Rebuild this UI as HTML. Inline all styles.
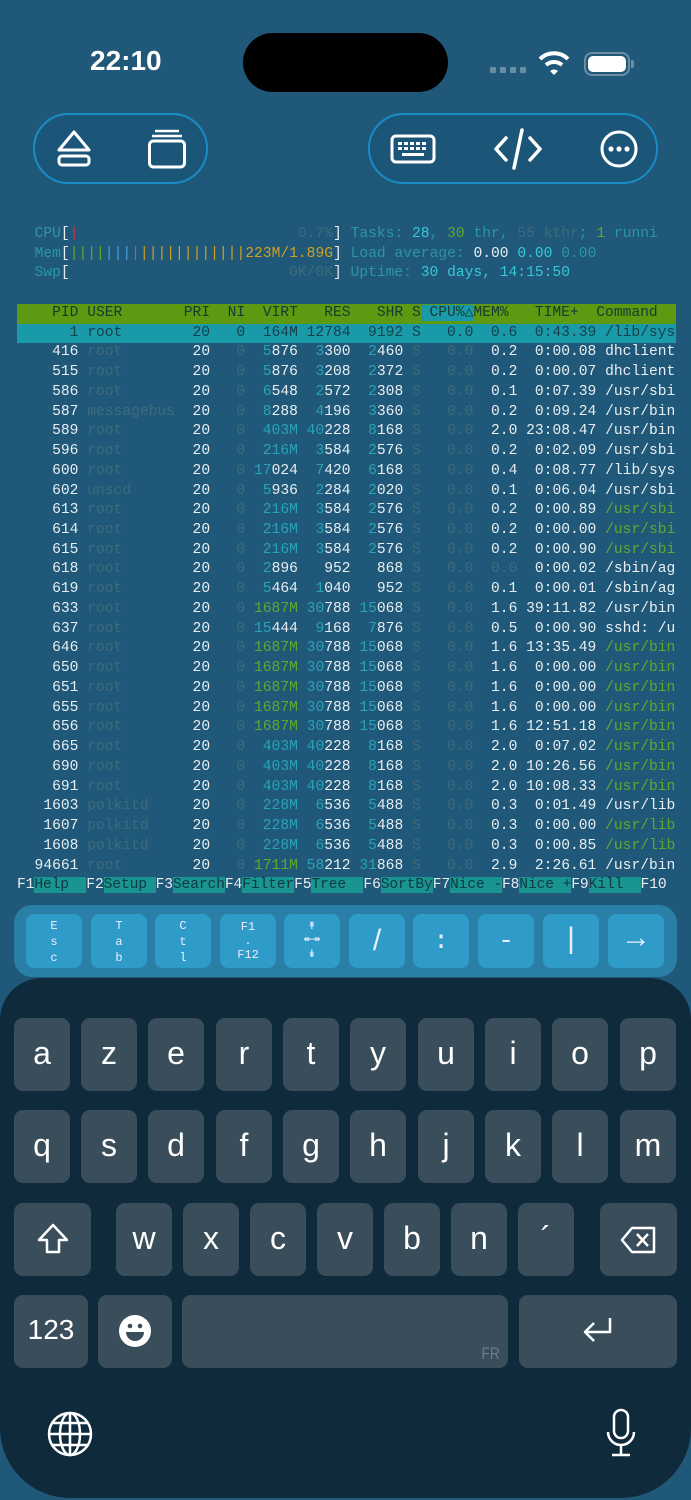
<!DOCTYPE html>
<html><head><meta charset="utf-8"><style>
*{margin:0;padding:0;box-sizing:border-box}
html,body{width:691px;height:1500px;overflow:hidden}
body{background:#1f5878;position:relative;font-family:"Liberation Sans",sans-serif}
.abs{position:absolute}
#term{position:absolute;left:17px;top:225px;font-family:"Liberation Mono",monospace;font-size:14.63px;line-height:19.74px;color:#e8eef2}
#term div{height:19.74px;width:659px;white-space:pre}
d{color:#3f6a7c}t{color:#2aa3b5}g{color:#5fa830}c{color:#35c9d6}l{color:#2a96a6}y{color:#d0a020}bl{color:#4aa0d8}m{color:#a05aa0}r{color:#d03040}
.hd{background:#5d9a12;color:#183a30}
.hl{background:#1a9aa8}
.sel{background:#1a9aa8;color:#16404c}
.fk{background:#1a9490;color:#0e3a44}
.pill{position:absolute;border:2px solid #1a8cc8;border-radius:36px;background:#1b5679}
.xb{position:absolute;left:14px;top:905px;width:663px;height:72px;background:#2a7fa6;border-radius:18px}
.xk{position:absolute;top:914px;width:56px;height:54px;background:#2e9bc8;border-radius:8px;color:#eef;text-align:center;font-family:"Liberation Mono",monospace}
.kb{position:absolute;left:0;top:978px;width:691px;height:520px;background:#0e2a3b;border-radius:42px 42px 70px 70px}
.key{position:absolute;width:56px;height:73px;background:#3a4d5a;border-radius:9px;color:#fff;font-size:32px;text-align:center;line-height:70px}
</style></head><body>
<div class="abs" style="left:90px;top:45px;font-size:28px;font-weight:bold;color:#fff">22:10</div>
<div class="abs" style="left:243px;top:33px;width:205px;height:59px;background:#000;border-radius:30px"></div>
<div class="abs" style="left:490px;top:67px;width:6px;height:6px;background:#6a8fa3;border-radius:1px;box-shadow:10px 0 #6a8fa3,20px 0 #6a8fa3,30px 0 #6a8fa3"></div>
<svg class="abs" style="left:538px;top:50px" width="32" height="26" viewBox="0 0 32 26"><path d="M2 9 A20 20 0 0 1 30 9" stroke="#fff" stroke-width="4" fill="none"/><path d="M8 15 A12 12 0 0 1 24 15" stroke="#fff" stroke-width="4" fill="none"/><path d="M12 21 L16 25 L20 21 A6 6 0 0 0 12 21Z" fill="#fff"/></svg>
<div class="abs" style="left:584px;top:52px;width:46px;height:24px;border:2px solid #6a8fa3;border-radius:8px;padding:2px"><div style="width:100%;height:100%;background:#fff;border-radius:5px"></div></div>
<div class="abs" style="left:631px;top:60px;width:3px;height:8px;background:#6a8fa3;border-radius:0 2px 2px 0"></div>

<div class="pill" style="left:33px;top:113px;width:175px;height:71px"></div>
<svg class="abs" style="left:54px;top:128px" width="40" height="42" viewBox="0 0 40 42"><path d="M20 4 L35 22 H5 Z" fill="none" stroke="#fff" stroke-width="3" stroke-linejoin="round"/><rect x="5" y="28" width="30" height="9" rx="3" fill="none" stroke="#fff" stroke-width="3"/></svg>
<svg class="abs" style="left:146px;top:128px" width="42" height="42" viewBox="0 0 42 42"><path d="M9 3 H33 M6 8 H36" stroke="#fff" stroke-width="2.5"/><rect x="3.5" y="13" width="35" height="26" rx="4" fill="none" stroke="#fff" stroke-width="3"/></svg>
<div class="pill" style="left:368px;top:113px;width:290px;height:71px"></div>
<svg class="abs" style="left:390px;top:134px" width="46" height="30" viewBox="0 0 46 30"><rect x="2" y="2" width="42" height="26" rx="4" fill="none" stroke="#fff" stroke-width="3"/><g fill="#fff"><rect x="8" y="8" width="4" height="3"/><rect x="14" y="8" width="4" height="3"/><rect x="20" y="8" width="4" height="3"/><rect x="26" y="8" width="4" height="3"/><rect x="32" y="8" width="4" height="3"/><rect x="8" y="13" width="4" height="3"/><rect x="14" y="13" width="4" height="3"/><rect x="20" y="13" width="4" height="3"/><rect x="26" y="13" width="4" height="3"/><rect x="32" y="13" width="4" height="3"/><rect x="12" y="19" width="22" height="3"/></g></svg>
<svg class="abs" style="left:492px;top:126px" width="52" height="46" viewBox="0 0 52 46"><path d="M14 12 L4 23 L14 34 M38 12 L48 23 L38 34 M30 4 L22 42" stroke="#fff" stroke-width="3.5" fill="none" stroke-linecap="round" stroke-linejoin="round"/></svg>
<svg class="abs" style="left:598px;top:128px" width="42" height="42" viewBox="0 0 42 42"><circle cx="21" cy="21" r="17" fill="none" stroke="#fff" stroke-width="3"/><circle cx="13" cy="21" r="2.6" fill="#fff"/><circle cx="21" cy="21" r="2.6" fill="#fff"/><circle cx="29" cy="21" r="2.6" fill="#fff"/></svg>

<div id="term"><div>  <l>CPU</l>[<r>|</r>                         <d>0.7%</d>] <l>Tasks: </l><c>28</c><l>, </l><g>30</g><l> thr, </l><d>55 kthr</d><l>; </l><g>1</g><l> runni</l></div><div>  <l>Mem</l>[<g>||||</g><bl>|||</bl><m>|</m><y>||||||||||||223M/1.89G</y>] <l>Load average: </l>0.00 <c>0.00</c> <l>0.00</l></div><div>  <l>Swp</l>[                         <d>0K/0K</d>] <l>Uptime: </l><c>30 days, 14:15:50</c></div><div> </div><div class="hd">    PID USER       PRI  NI  VIRT   RES   SHR S<span class="hl"> CPU%△</span>MEM%   TIME+  Command</div><div class="sel">      1 root        20   0  164M 12784  9192 S   0.0  0.6  0:43.39 /lib/sys</div><div>    416 <d>root      </d>  20 <d>  0</d>  <t>5</t>876  <t>3</t>300  <t>2</t>460 <d>S</d> <d>  0.0</d>  0.2  0:00.08 dhclient</div><div>    515 <d>root      </d>  20 <d>  0</d>  <t>5</t>876  <t>3</t>208  <t>2</t>372 <d>S</d> <d>  0.0</d>  0.2  0:00.07 dhclient</div><div>    586 <d>root      </d>  20 <d>  0</d>  <t>6</t>548  <t>2</t>572  <t>2</t>308 <d>S</d> <d>  0.0</d>  0.1  0:07.39 /usr/sbi</div><div>    587 <d>messagebus</d>  20 <d>  0</d>  <t>8</t>288  <t>4</t>196  <t>3</t>360 <d>S</d> <d>  0.0</d>  0.2  0:09.24 /usr/bin</div><div>    589 <d>root      </d>  20 <d>  0</d>  <t>403M</t> <t>40</t>228  <t>8</t>168 <d>S</d> <d>  0.0</d>  2.0 23:08.47 /usr/bin</div><div>    596 <d>root      </d>  20 <d>  0</d>  <t>216M</t>  <t>3</t>584  <t>2</t>576 <d>S</d> <d>  0.0</d>  0.2  0:02.09 /usr/sbi</div><div>    600 <d>root      </d>  20 <d>  0</d> <t>17</t>024  <t>7</t>420  <t>6</t>168 <d>S</d> <d>  0.0</d>  0.4  0:08.77 /lib/sys</div><div>    602 <d>unscd     </d>  20 <d>  0</d>  <t>5</t>936  <t>2</t>284  <t>2</t>020 <d>S</d> <d>  0.0</d>  0.1  0:06.04 /usr/sbi</div><div>    613 <d>root      </d>  20 <d>  0</d>  <t>216M</t>  <t>3</t>584  <t>2</t>576 <d>S</d> <d>  0.0</d>  0.2  0:00.89 <g>/usr/sbi</g></div><div>    614 <d>root      </d>  20 <d>  0</d>  <t>216M</t>  <t>3</t>584  <t>2</t>576 <d>S</d> <d>  0.0</d>  0.2  0:00.00 <g>/usr/sbi</g></div><div>    615 <d>root      </d>  20 <d>  0</d>  <t>216M</t>  <t>3</t>584  <t>2</t>576 <d>S</d> <d>  0.0</d>  0.2  0:00.90 <g>/usr/sbi</g></div><div>    618 <d>root      </d>  20 <d>  0</d>  <t>2</t>896   952   868 <d>S</d> <d>  0.0</d> <d> 0.0</d>  0:00.02 /sbin/ag</div><div>    619 <d>root      </d>  20 <d>  0</d>  <t>5</t>464  <t>1</t>040   952 <d>S</d> <d>  0.0</d>  0.1  0:00.01 /sbin/ag</div><div>    633 <d>root      </d>  20 <d>  0</d> <g>1687M</g> <t>30</t>788 <t>15</t>068 <d>S</d> <d>  0.0</d>  1.6 39:11.82 /usr/bin</div><div>    637 <d>root      </d>  20 <d>  0</d> <t>15</t>444  <t>9</t>168  <t>7</t>876 <d>S</d> <d>  0.0</d>  0.5  0:00.90 sshd: /u</div><div>    646 <d>root      </d>  20 <d>  0</d> <g>1687M</g> <t>30</t>788 <t>15</t>068 <d>S</d> <d>  0.0</d>  1.6 13:35.49 <g>/usr/bin</g></div><div>    650 <d>root      </d>  20 <d>  0</d> <g>1687M</g> <t>30</t>788 <t>15</t>068 <d>S</d> <d>  0.0</d>  1.6  0:00.00 <g>/usr/bin</g></div><div>    651 <d>root      </d>  20 <d>  0</d> <g>1687M</g> <t>30</t>788 <t>15</t>068 <d>S</d> <d>  0.0</d>  1.6  0:00.00 <g>/usr/bin</g></div><div>    655 <d>root      </d>  20 <d>  0</d> <g>1687M</g> <t>30</t>788 <t>15</t>068 <d>S</d> <d>  0.0</d>  1.6  0:00.00 <g>/usr/bin</g></div><div>    656 <d>root      </d>  20 <d>  0</d> <g>1687M</g> <t>30</t>788 <t>15</t>068 <d>S</d> <d>  0.0</d>  1.6 12:51.18 <g>/usr/bin</g></div><div>    665 <d>root      </d>  20 <d>  0</d>  <t>403M</t> <t>40</t>228  <t>8</t>168 <d>S</d> <d>  0.0</d>  2.0  0:07.02 <g>/usr/bin</g></div><div>    690 <d>root      </d>  20 <d>  0</d>  <t>403M</t> <t>40</t>228  <t>8</t>168 <d>S</d> <d>  0.0</d>  2.0 10:26.56 <g>/usr/bin</g></div><div>    691 <d>root      </d>  20 <d>  0</d>  <t>403M</t> <t>40</t>228  <t>8</t>168 <d>S</d> <d>  0.0</d>  2.0 10:08.33 <g>/usr/bin</g></div><div>   1603 <d>polkitd   </d>  20 <d>  0</d>  <t>228M</t>  <t>6</t>536  <t>5</t>488 <d>S</d> <d>  0.0</d>  0.3  0:01.49 /usr/lib</div><div>   1607 <d>polkitd   </d>  20 <d>  0</d>  <t>228M</t>  <t>6</t>536  <t>5</t>488 <d>S</d> <d>  0.0</d>  0.3  0:00.00 <g>/usr/lib</g></div><div>   1608 <d>polkitd   </d>  20 <d>  0</d>  <t>228M</t>  <t>6</t>536  <t>5</t>488 <d>S</d> <d>  0.0</d>  0.3  0:00.85 <g>/usr/lib</g></div><div>  94661 <d>root      </d>  20 <d>  0</d> <g>1711M</g> <t>58</t>212 <t>31</t>868 <d>S</d> <d>  0.0</d>  2.9  2:26.61 /usr/bin</div><div style="letter-spacing:-0.12px">F1<span class="fk">Help  </span>F2<span class="fk">Setup </span>F3<span class="fk">Search</span>F4<span class="fk">Filter</span>F5<span class="fk">Tree  </span>F6<span class="fk">SortBy</span>F7<span class="fk">Nice -</span>F8<span class="fk">Nice +</span>F9<span class="fk">Kill  </span>F10</div></div>

<div class="xb"></div>
<div class="xk" style="left:26px;font-size:12px;line-height:16px;padding-top:4px">E<br>s<br>c</div>
<div class="xk" style="left:91px;font-size:12px;line-height:16px;padding-top:4px">T<br>a<br>b</div>
<div class="xk" style="left:155px;font-size:12px;line-height:16px;padding-top:4px">C<br>t<br>l</div>
<div class="xk" style="left:220px;font-size:12px;line-height:14px;padding-top:6px">F1<br>.<br>F12</div>
<div class="xk" style="left:284px;font-size:14px;line-height:14px;padding-top:5px">↟<br>↞↠<br>↡</div>
<div class="xk" style="left:349px;font-size:30px;line-height:54px;font-family:'Liberation Sans',sans-serif">/</div>
<div class="xk" style="left:413px;font-size:26px;line-height:54px">:</div>
<div class="xk" style="left:478px;font-size:26px;line-height:54px">-</div>
<div class="xk" style="left:543px;font-size:30px;line-height:54px">|</div>
<div class="xk" style="left:608px;font-size:30px;line-height:52px">→</div>

<div class="kb"></div>
<div class="key" style="left:14px;top:1018px">a</div><div class="key" style="left:81px;top:1018px">z</div><div class="key" style="left:148px;top:1018px">e</div><div class="key" style="left:216px;top:1018px">r</div><div class="key" style="left:283px;top:1018px">t</div><div class="key" style="left:350px;top:1018px">y</div><div class="key" style="left:418px;top:1018px">u</div><div class="key" style="left:485px;top:1018px">i</div><div class="key" style="left:552px;top:1018px">o</div><div class="key" style="left:620px;top:1018px">p</div>
<div class="key" style="left:14px;top:1110px">q</div><div class="key" style="left:81px;top:1110px">s</div><div class="key" style="left:148px;top:1110px">d</div><div class="key" style="left:216px;top:1110px">f</div><div class="key" style="left:283px;top:1110px">g</div><div class="key" style="left:350px;top:1110px">h</div><div class="key" style="left:418px;top:1110px">j</div><div class="key" style="left:485px;top:1110px">k</div><div class="key" style="left:552px;top:1110px">l</div><div class="key" style="left:620px;top:1110px">m</div>
<div class="key" style="left:14px;top:1203px;width:77px"><svg width="34" height="34" viewBox="0 0 34 34" style="margin-top:19px"><path d="M17 3 L31 18 H23 V30 H11 V18 H3 Z" fill="none" stroke="#fff" stroke-width="2.5" stroke-linejoin="round"/></svg></div>
<div class="key" style="left:116px;top:1203px">w</div><div class="key" style="left:183px;top:1203px">x</div><div class="key" style="left:250px;top:1203px">c</div><div class="key" style="left:317px;top:1203px">v</div><div class="key" style="left:384px;top:1203px">b</div><div class="key" style="left:451px;top:1203px">n</div><div class="key" style="left:518px;top:1203px">´</div>
<div class="key" style="left:600px;top:1203px;width:77px"><svg width="38" height="30" viewBox="0 0 38 30" style="margin-top:22px"><path d="M12 3 H34 V27 H12 L2 15 Z" fill="none" stroke="#fff" stroke-width="2.5" stroke-linejoin="round"/><path d="M17 9 L28 21 M28 9 L17 21" stroke="#fff" stroke-width="2.5"/></svg></div>
<div class="key" style="left:14px;top:1295px;width:74px;font-size:28px">123</div>
<div class="key" style="left:98px;top:1295px;width:74px"><svg width="34" height="34" viewBox="0 0 34 34" style="margin-top:19px"><circle cx="17" cy="17" r="16" fill="#fff"/><circle cx="12" cy="12" r="2.3" fill="#3a4d5a"/><circle cx="22" cy="12" r="2.3" fill="#3a4d5a"/><path d="M8 18 H26 A9 9 0 0 1 8 18Z" fill="#3a4d5a"/></svg></div>
<div class="key" style="left:182px;top:1295px;width:326px"><span style="position:absolute;right:8px;bottom:6px;font-size:17px;line-height:17px;color:#6a7e8a;transform:scaleX(0.8);transform-origin:right">FR</span></div>
<div class="key" style="left:519px;top:1295px;width:158px"><svg width="36" height="30" viewBox="0 0 36 30" style="margin-top:20px"><path d="M30 3 V17 H6 M14 8 L5 17 L14 26" fill="none" stroke="#fff" stroke-width="2.5" stroke-linejoin="round"/></svg></div>
<svg class="abs" style="left:47px;top:1411px" width="46" height="46" viewBox="0 0 46 46"><g fill="none" stroke="#fff" stroke-width="2.5"><circle cx="23" cy="23" r="21"/><ellipse cx="23" cy="23" rx="10" ry="21"/><path d="M23 2 V44 M2 23 H44 M6 12 H40 M6 34 H40"/></g></svg>
<svg class="abs" style="left:604px;top:1408px" width="34" height="50" viewBox="0 0 34 50"><g fill="none" stroke="#fff" stroke-width="2.5"><rect x="10" y="2" width="14" height="28" rx="7"/><path d="M4 24 A13 13 0 0 0 30 24 M17 37 V46 M8 47 H26"/></g></svg>
</body></html>
